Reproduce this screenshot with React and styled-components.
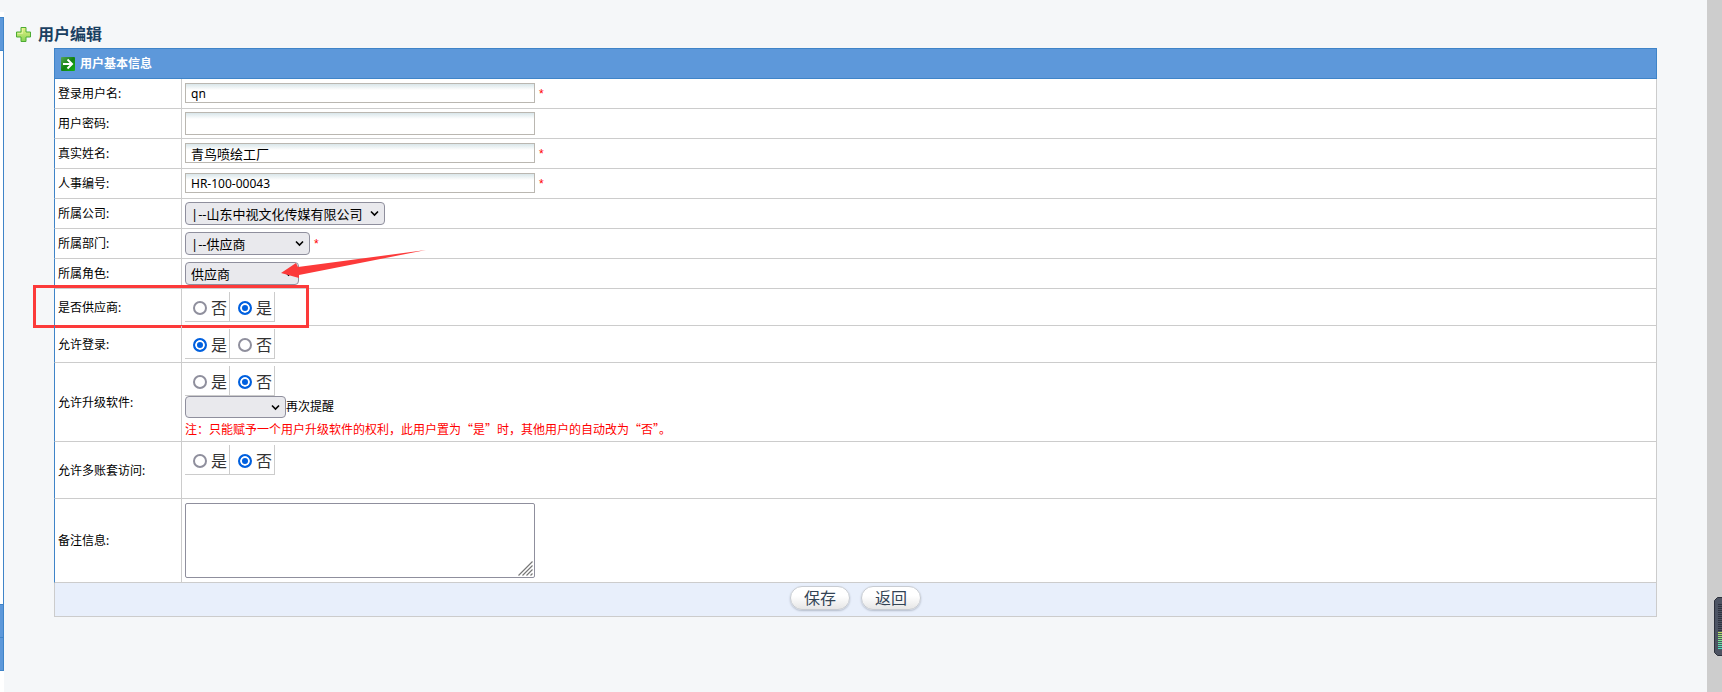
import React from "react";
import styled, { createGlobalStyle } from "styled-components";

const GlobalStyle = createGlobalStyle`
  * {
    box-sizing: border-box;
  }

  body {
    margin: 0;
    background: #f5f7f9;
    color: #000;
    font-family: "Noto Sans", "Noto Sans CJK SC", sans-serif;
    font-size: 12px;
    line-height: 20px;
  }
`;

const Page = styled.div`
  display: flex;
  min-height: 100vh;
`;

/* the edge of the menu that stays visible on the left */
const MenuEdge = styled.aside`
  display: flex;
  flex-direction: column;
  width: 4px;
  padding-top: 5px;
  margin-top: 12px;
  background: #fff;
`;

const MenuBlock = styled.div`
  height: ${props => props.$height}px;
  background: ${props => props.$open ? "#fff" : "#5d98da"};
  border-right: 1px solid #3f84c8;
  border-top: ${props => props.$open ? "0" : "1px solid #3f84c8"};
  border-bottom: ${props => props.$last ? "1px solid #3f84c8" : "0"};
`;

const Main = styled.main`
  flex: 1;
  padding-top: 20px;
`;

const ScrollTrack = styled.div`
  width: 15px;
  background: #cdcdcd;
`;

const Title = styled.h1`
  display: flex;
  align-items: center;
  gap: 7px;
  height: 28px;
  margin: 0;
  padding-left: 12px;
  color: #1a4062;
  font-size: 16px;
  font-weight: bold;
`;

const Form = styled.form`
  margin: 0 50px;
`;

const Table = styled.table`
  width: 100%;
  table-layout: fixed;
  border-collapse: separate;
  border-spacing: 0;
  background: #fff;
`;

const LabelCol = styled.col`
  width: 128px;
`;

const HeadCell = styled.th`
  height: 31px;
  padding: 0 6px;
  background: #5d98da;
  border: 1px solid #3f84c8;
  color: #fff;
  font-size: 12px;
  text-align: left;
`;

const HeadInner = styled.div`
  display: flex;
  align-items: center;
  gap: 5px;
`;

const Row = styled.tr`
  position: relative;
  height: ${props => props.$height || 30}px;
`;

const LabelCell = styled.td`
  padding: 1px 3px 0;
  border-left: 1px solid #3f84c8;
  border-right: 1px solid #ccc;
  border-bottom: 1px solid #ccc;
`;

const FieldCell = styled.td`
  padding: ${props => props.$top ? "3px 3px 0" : "0 3px"};
  border-right: 1px solid #ccc;
  border-bottom: 1px solid #ccc;
  vertical-align: ${props => props.$top ? "top" : "middle"};
`;

const Line = styled.div`
  display: flex;
  align-items: center;
`;

const Input = styled.input`
  width: 350px;
  height: 20px;
  margin: 0 0 1px;
  padding: 0 5px;
  background: linear-gradient(#d9e6ea, #fff 6px);
  border: 1px solid #bab7b1;
  font-family: inherit;
  font-size: ${props => props.$large ? 13 : 12}px;

  &[type="password"] {
    height: 23px;
    margin: 0;
  }
`;

const Star = styled.span`
  padding-left: 4px;
  color: #f00;
  font-family: "Liberation Sans", sans-serif;
`;

const SelectBox = styled.span`
  position: relative;
  display: inline-flex;
  width: ${props => props.$width}px;

  svg {
    position: absolute;
    top: 8px;
    right: 6px;
    pointer-events: none;
  }
`;

const Select = styled.select`
  appearance: none;
  width: 100%;
  height: ${props => props.$short ? 22 : 23}px;
  padding: 0 18px 0 5px;
  background: #e9e9ed;
  border: 1px solid #8f8f9d;
  border-radius: 4px;
  color: #000;
  font-family: inherit;
  font-size: 13px;
`;

const RadioGroup = styled.div`
  display: flex;
`;

const RadioLabel = styled.label`
  display: flex;
  align-items: center;
  gap: 4px;
  width: 45px;
  height: 30px;
  padding: 2px 0 0 8px;
  border-right: 1px solid #ccc;
  border-bottom: 1px solid #ccc;
  color: #333;
  font-size: 16px;
`;

const Radio = styled.input`
  appearance: none;
  flex: none;
  width: 14px;
  height: 14px;
  margin: 0;
  background: #fff;
  border: 2px solid #8f8f9d;
  border-radius: 50%;

  &:checked {
    background: #0060df;
    border-color: #0060df;
    box-shadow: inset 0 0 0 2px #fff;
  }
`;

/* CJK font first, so that the quotes take a full width */
const Note = styled.div`
  padding-top: 1px;
  color: #f00;
  font-family: "Noto Sans CJK SC", sans-serif;
`;

const AreaBox = styled.div`
  position: relative;
  width: 350px;
  height: 75px;

  svg {
    position: absolute;
    right: 2px;
    bottom: 2px;
    pointer-events: none;
  }
`;

const TextArea = styled.textarea`
  display: block;
  width: 100%;
  height: 100%;
  padding: 2px 5px;
  border: 1px solid #8f8f9d;
  border-radius: 2px;
  font: inherit;
  resize: none;
`;

const FootCell = styled.td`
  height: 34px;
  padding: 0 0 3px;
  background: #e8effb;
  border: 1px solid #ccc;
  border-top: 0;
`;

const Actions = styled.div`
  display: flex;
  justify-content: center;
  gap: 11px;
`;

const Button = styled.button`
  width: 60px;
  height: 24px;
  padding: 0;
  background: linear-gradient(#fff 40%, #e6e6e6);
  border: 1px solid #c8ccd2;
  border-radius: 12px;
  box-shadow: 0 1px 2px #b4bccb;
  color: #334455;
  font-family: inherit;
  font-size: 16px;
  line-height: 20px;
`;

/* red frame and arrow drawn over the form */
const MarkFrame = styled.div`
  position: absolute;
  top: -4px;
  left: -21px;
  width: 276px;
  height: 43px;
  border: 3px solid #fc3a3a;
  pointer-events: none;
`;

const MarkArrow = styled.svg`
  position: absolute;
  top: -9px;
  left: 227px;
  pointer-events: none;
`;

const Meter = styled.div`
  position: fixed;
  right: 0;
  bottom: 36px;
  display: flex;
`;

const PlusIcon = () => (
  <svg width="15" height="15" viewBox="0 0 15 15" aria-hidden="true">
    <defs>
      <linearGradient id="plus" x1="0" y1="0" x2="0" y2="1">
        <stop offset="0" stopColor="#e9f287" />
        <stop offset="1" stopColor="#86d455" />
      </linearGradient>
    </defs>
    <path d="M5 .5h5v4.500h4.500v5H10v4.500H5V10H.5V5H5z" fill="url(#plus)" stroke="#4bab33" strokeLinejoin="round" />
    <path d="M6.500 1.500v5h-5" fill="none" stroke="#f6fbcb" strokeOpacity=".5" />
  </svg>
);

const GoIcon = () => (
  <svg width="14" height="14" viewBox="0 0 14 14" aria-hidden="true">
    <defs>
      <linearGradient id="go" x1="0" y1="0" x2="1" y2="1">
        <stop offset="0" stopColor="#56a556" />
        <stop offset=".5" stopColor="#128312" />
        <stop offset="1" stopColor="#14b414" />
      </linearGradient>
    </defs>
    <rect width="14" height="14" rx="1" fill="url(#go)" />
    <path d="M2 7h9M6.500 2.500L11 7l-4.500 4.500" fill="none" stroke="#fff" strokeWidth="2" />
  </svg>
);

const Chevron = () => (
  <svg width="9" height="7" viewBox="0 0 9 7" aria-hidden="true">
    <path d="M1 1.500l3.500 3.500L8 1.500" fill="none" stroke="#000" strokeWidth="1.600" />
  </svg>
);

const Grip = () => (
  <svg width="15" height="15" viewBox="0 0 15 15" aria-hidden="true">
    <path d="M.5 14.500l14-14M4.500 14.500l10-10M8.500 14.500l6-6M12.500 14.500l2-2" stroke="#777" strokeWidth="1.200" />
  </svg>
);

const DropDown = ({ id, width, short, text }) => (
  <SelectBox $width={width}>
    <Select id={id} $short={short}>
      <option>{text}</option>
    </Select>
    <Chevron />
  </SelectBox>
);

const YesNo = ({ name, label, options, value }) => (
  <RadioGroup role="radiogroup" aria-label={label}>
    {options.map(option => (
      <RadioLabel key={option}>
        <Radio type="radio" name={name} value={option} defaultChecked={option === value} />
        {option}
      </RadioLabel>
    ))}
  </RadioGroup>
);

const textFields = [
  { id: "login", label: "登录用户名:", value: "qn", required: true },
  { id: "password", label: "用户密码:", value: "", type: "password" },
  { id: "realName", label: "真实姓名:", value: "青鸟喷绘工厂", required: true, large: true },
  { id: "hrCode", label: "人事编号:", value: "HR-100-00043", required: true }
];

const bars = [
  "#2f3440", "#2f3440", "#2f3440", "#2f3440", "#2f3440", "#2f3440", "#2f3440",
  "#2f3440", "#2f3440", "#2f3440", "#2f3440", "#2f3440", "#2f3440", "#2f3440",
  "#b9e35c", "#a4e468", "#94e574", "#84e682", "#76e690", "#68e69e", "#5ce6aa", "#50e6b6", "#46e6c0"
];

const App = () => {
  return (
    <Page lang="zh-CN">
      <GlobalStyle />
      <MenuEdge>
        <MenuBlock $height={34} $last />
        <MenuBlock $height={553} $open />
        <MenuBlock $height={33} />
        <MenuBlock $height={34} $last />
      </MenuEdge>

      <Main>
        <Title>
          <PlusIcon />
          用户编辑
        </Title>

        <Form onSubmit={e => e.preventDefault()}>
          <Table>
            <colgroup>
              <LabelCol />
              <col />
            </colgroup>
            <thead>
              <tr>
                <HeadCell colSpan={2}>
                  <HeadInner>
                    <GoIcon />
                    用户基本信息
                  </HeadInner>
                </HeadCell>
              </tr>
            </thead>
            <tbody>
              {textFields.map(field => (
                <Row key={field.id}>
                  <LabelCell><label htmlFor={field.id}>{field.label}</label></LabelCell>
                  <FieldCell>
                    <Line>
                      <Input
                        id={field.id}
                        type={field.type || "text"}
                        defaultValue={field.value}
                        $large={field.large}
                      />
                      {field.required && <Star>*</Star>}
                    </Line>
                  </FieldCell>
                </Row>
              ))}
              <Row>
                <LabelCell><label htmlFor="company">所属公司:</label></LabelCell>
                <FieldCell>
                  <Line><DropDown id="company" width={200} text="|--山东中视文化传媒有限公司" /></Line>
                </FieldCell>
              </Row>
              <Row>
                <LabelCell><label htmlFor="dept">所属部门:</label></LabelCell>
                <FieldCell>
                  <Line>
                    <DropDown id="dept" width={125} text="|--供应商" />
                    <Star>*</Star>
                  </Line>
                </FieldCell>
              </Row>
              <Row>
                <LabelCell><label htmlFor="role">所属角色:</label></LabelCell>
                <FieldCell>
                  <Line><DropDown id="role" width={114} text="供应商" /></Line>
                  <MarkArrow width="146" height="30" viewBox="0 0 146 30" aria-hidden="true">
                    <path d="M0 23L15 13L17 17L145 0L18 25L18 28z" fill="#fc3a3a" />
                  </MarkArrow>
                </FieldCell>
              </Row>
              <Row $height={37}>
                <LabelCell>是否供应商:</LabelCell>
                <FieldCell $top>
                  <YesNo name="supplier" label="是否供应商" options={["否", "是"]} value="是" />
                  <MarkFrame />
                </FieldCell>
              </Row>
              <Row $height={37}>
                <LabelCell>允许登录:</LabelCell>
                <FieldCell $top>
                  <YesNo name="allowLogin" label="允许登录" options={["是", "否"]} value="是" />
                </FieldCell>
              </Row>
              <Row $height={79}>
                <LabelCell>允许升级软件:</LabelCell>
                <FieldCell $top>
                  <YesNo name="upgrade" label="允许升级软件" options={["是", "否"]} value="否" />
                  <Line>
                    <DropDown id="remind" width={101} short text="" />
                    <label htmlFor="remind">再次提醒</label>
                  </Line>
                  <Note>注：只能赋予一个用户升级软件的权利，此用户置为“是”时，其他用户的自动改为“否”。</Note>
                </FieldCell>
              </Row>
              <Row $height={57}>
                <LabelCell>允许多账套访问:</LabelCell>
                <FieldCell $top>
                  <YesNo name="multi" label="允许多账套访问" options={["是", "否"]} value="否" />
                </FieldCell>
              </Row>
              <Row $height={84}>
                <LabelCell><label htmlFor="remark">备注信息:</label></LabelCell>
                <FieldCell>
                  <AreaBox>
                    <TextArea id="remark" />
                    <Grip />
                  </AreaBox>
                </FieldCell>
              </Row>
            </tbody>
            <tfoot>
              <tr>
                <FootCell colSpan={2}>
                  <Actions>
                    <Button type="submit">保存</Button>
                    <Button type="button">返回</Button>
                  </Actions>
                </FootCell>
              </tr>
            </tfoot>
          </Table>
        </Form>
      </Main>

      <ScrollTrack />
      <Meter>
        <svg width="8" height="59" viewBox="0 0 8 59" aria-hidden="true">
          <path d="M8 .5H3.500L.5 3.500v52l3 3H8" fill="#4d5463" stroke="#2c303b" />
          {bars.map((color, i) => (
            <rect key={i} x="4" y={7 + i * 2} width="4" height="1" fill={color} />
          ))}
        </svg>
      </Meter>
    </Page>
  );
};

export default App;
